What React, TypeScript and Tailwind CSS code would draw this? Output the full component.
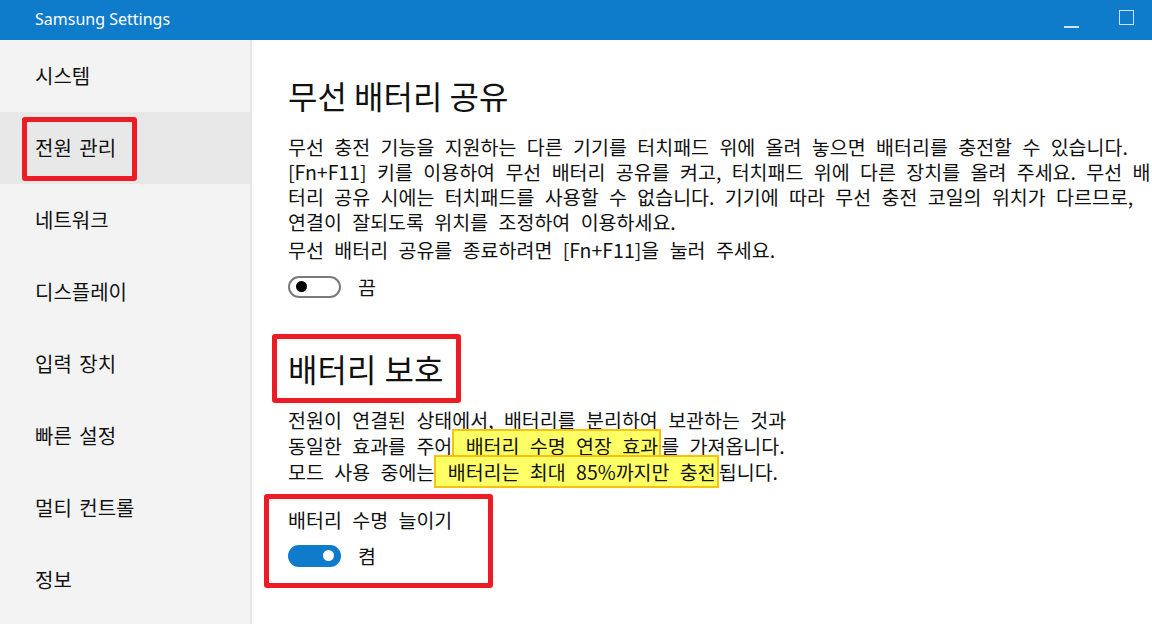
import React from "react";

const font = { fontFamily: '"Noto Sans CJK KR", "Noto Sans", sans-serif' };

const menu = ["시스템", "전원 관리", "네트워크", "디스플레이", "입력 장치", "빠른 설정", "멀티 컨트롤", "정보"];

const Toggle = ({ on }: { on: boolean }) =>
  on ? (
    <div className="flex h-[22px] w-[53px] items-center justify-end rounded-full bg-[#0e7bcb] pr-[7px]">
      <div className="size-[11px] rounded-full bg-white" />
    </div>
  ) : (
    <div className="flex h-[22px] w-[53px] items-center rounded-full border-2 border-[#7a7a7a] pl-[6px]">
      <div className="size-[11px] rounded-full bg-black" />
    </div>
  );

const App = () => {
  return (
    <div className="flex h-[624px] w-[1152px] flex-col overflow-hidden bg-white text-[#111]" style={font}>
      <div className="flex h-10 shrink-0 items-center bg-[#0e7bcb] pb-[3px] pl-[35px] text-white">
        <span className="text-[16px]" style={{ fontFamily: '"Noto Sans", sans-serif' }}>
          Samsung Settings
        </span>
        <div className="ml-auto flex items-center">
          <div className="mt-[17px] mr-[40px] h-[1.5px] w-[15px] bg-[#cfe3f4]" />
          <div className="mr-[18px] mb-[3px] size-[15px] border-[1.5px] border-[#cfe3f4]" />
        </div>
      </div>

      <div className="flex flex-1">
        <div className="w-[252px] shrink-0 border-r-2 border-[#e6e6e6] bg-[#f3f3f3]">
          {menu.map((m, i) => (
            <div
              key={m}
              className={`relative flex h-[72px] items-center pl-[35px] text-[20px] [word-spacing:3px] ${i === 1 ? "bg-[#e8e8e8]" : ""}`}
            >
              {m}
              {i === 1 && (
                <div className="absolute top-[5px] left-[22px] h-[64px] w-[115px] rounded-[3px] border-[5px] border-[#ed1c24]" />
              )}
            </div>
          ))}
        </div>

        <div className="flex-1 pl-[36px] [word-spacing:6px]">
          <h1 className="mt-[35px] text-[32px] leading-[40px] [word-spacing:0px]">무선 배터리 공유</h1>
          <div className="mt-[19px] text-[19.5px] leading-[25px]">
            <p className="whitespace-nowrap">무선 충전 기능을 지원하는 다른 기기를 터치패드 위에 올려 놓으면 배터리를 충전할 수 있습니다.</p>
            <p className="whitespace-nowrap">[Fn+F11] 키를 이용하여 무선 배터리 공유를 켜고, 터치패드 위에 다른 장치를 올려 주세요. 무선 배</p>
            <p className="whitespace-nowrap">터리 공유 시에는 터치패드를 사용할 수 없습니다. 기기에 따라 무선 충전 코일의 위치가 다르므로,</p>
            <p className="whitespace-nowrap">연결이 잘되도록 위치를 조정하여 이용하세요.</p>
            <p className="mt-[3px] whitespace-nowrap">무선 배터리 공유를 종료하려면 [Fn+F11]을 눌러 주세요.</p>
          </div>
          <div className="mt-[10px] flex items-center gap-[17px]">
            <Toggle on={false} />
            <span className="text-[19.5px]">끔</span>
          </div>

          <div className="mt-[33px] -ml-[16px] w-[189px] rounded-[3px] border-[5px] border-[#ed1c24] pl-[11px] [word-spacing:1px]">
            <h2 className="py-[9px] text-[32px] leading-[41px]">배터리 보호</h2>
          </div>
          <div className="mt-[4px] text-[19.5px] leading-[26px]">
            <p className="whitespace-nowrap">전원이 연결된 상태에서, 배터리를 분리하여 보관하는 것과</p>
            <p className="whitespace-nowrap">
              동일한 효과를 주어
              <span className="border-2 border-[#f6c20b] bg-[#ffff66] px-[1px]"> 배터리 수명 연장 효과</span>를 가져옵니다.
            </p>
            <p className="whitespace-nowrap">
              모드 사용 중에는
              <span className="border-2 border-[#f6c20b] bg-[#ffff66] px-[1px]"> 배터리는 최대 85%까지만 충전</span>됩니다.
            </p>
          </div>

          <div className="mt-[9px] -ml-[24px] w-[229px] rounded-[3px] border-[5px] border-[#ed1c24] pt-[8px] pb-[12px] pl-[19px]">
            <p className="text-[19.5px] leading-[26px]">배터리 수명 늘이기</p>
            <div className="mt-[8px] flex items-center gap-[17px]">
              <Toggle on={true} />
              <span className="text-[19.5px]">켬</span>
            </div>
          </div>
        </div>
      </div>
    </div>
  );
};

export default App;
